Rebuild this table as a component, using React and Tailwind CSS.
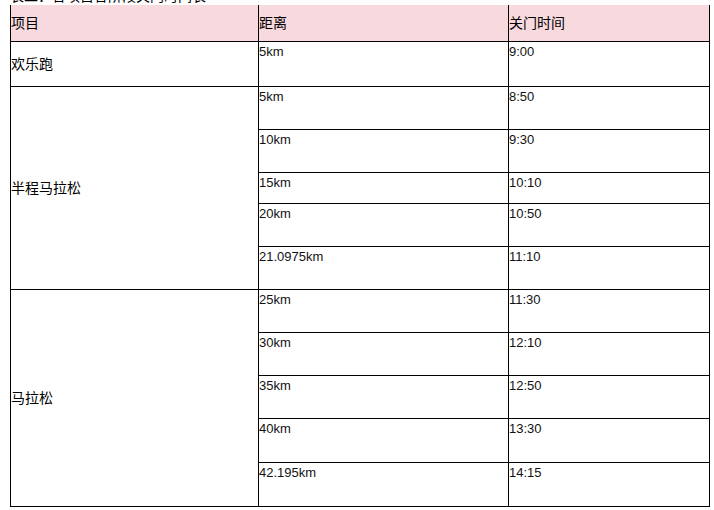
const rows = [
  { group: '欢乐跑', span: 1, dist: '5km', time: '9:00', h: 45 },
  { group: '半程马拉松', span: 5, dist: '5km', time: '8:50', h: 43 },
  { dist: '10km', time: '9:30', h: 43 },
  { dist: '15km', time: '10:10', h: 31 },
  { dist: '20km', time: '10:50', h: 43 },
  { dist: '21.0975km', time: '11:10', h: 43 },
  { group: '马拉松', span: 5, dist: '25km', time: '11:30', h: 43 },
  { dist: '30km', time: '12:10', h: 43 },
  { dist: '35km', time: '12:50', h: 43 },
  { dist: '40km', time: '13:30', h: 44 },
  { dist: '42.195km', time: '14:15', h: 44 },
];

const cjk = "font-['SimSun','Noto_Sans_CJK_SC',sans-serif] text-[14px]";
const num = "font-['Liberation_Sans',Arial,sans-serif] text-[13px] text-[#111]";

export default function App() {
  return (
    <div className="w-[714px] h-[510px] overflow-hidden bg-white text-black">
      <div className={`h-[5px] overflow-hidden flex items-end pl-[10px] ${cjk} leading-[16px]`}>
        <span className="mb-[2px]">表二：各项目各阶段关门时间表</span>
      </div>
      <table className="ml-[10px] w-[700px] table-fixed border-collapse">
        <colgroup>
          <col className="w-[248px]" />
          <col className="w-[250px]" />
          <col className="w-[201px]" />
        </colgroup>
        <thead>
          <tr className="h-[36px] bg-[#f8d9de]">
            <th className={`border-x border-b border-black p-0 text-left font-normal align-middle ${cjk}`}>项目</th>
            <th className={`border-x border-b border-black p-0 text-left font-normal align-middle ${cjk}`}>距离</th>
            <th className={`border-x border-b border-black p-0 text-left font-normal align-middle ${cjk}`}>关门时间</th>
          </tr>
        </thead>
        <tbody>
          {rows.map((r, i) => (
            <tr key={i} style={{ height: r.h }}>
              {r.group && (
                <td rowSpan={r.span} className={`border border-black p-0 align-middle ${cjk}`}>{r.group}</td>
              )}
              <td className={`border border-black p-0 pt-[2px] align-top leading-[16px] ${num}`}>{r.dist}</td>
              <td className={`border border-black p-0 pt-[2px] align-top leading-[16px] ${num}`}>{r.time}</td>
            </tr>
          ))}
        </tbody>
      </table>
      <div className={`pl-[10px] pt-[2px] ${cjk}`}>注：以上时间为北京时间</div>
    </div>
  );
}
